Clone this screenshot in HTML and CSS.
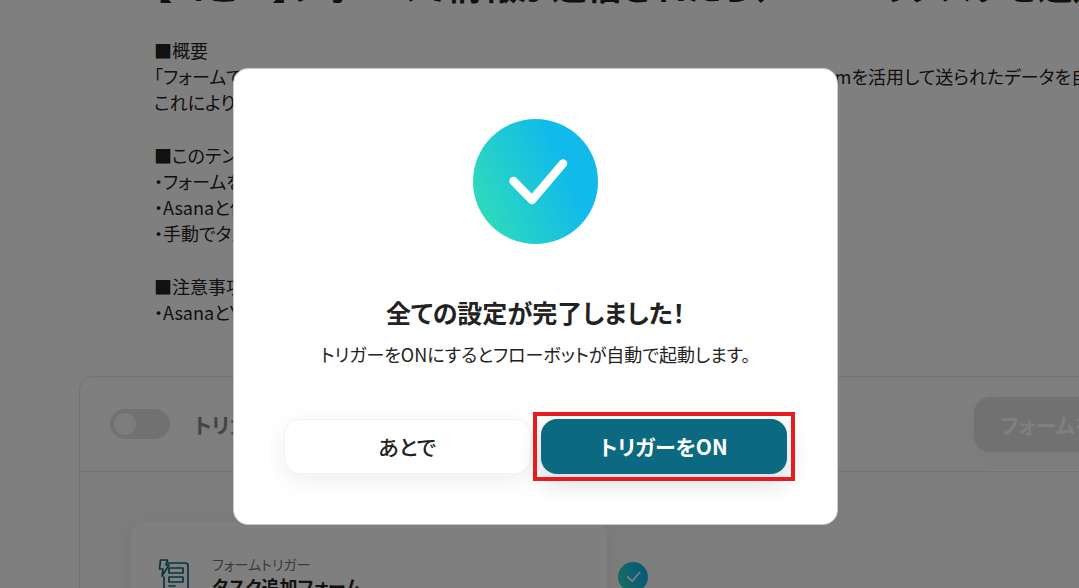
FILE: index.html
```html
<!DOCTYPE html>
<html lang="ja">
<head>
    <meta charset="UTF-8">
    <meta name="viewport" content="width=device-width, initial-scale=1.0">
    <title>フローボット</title>
    <link rel="stylesheet" href="styles.css">
</head>
<body>
    <svg class="defs" aria-hidden="true">
        <defs>
            <linearGradient id="check-grad" x1="0.1" y1="0.75" x2="0.9" y2="0.4">
                <stop offset="0" stop-color="#2dd8be"/>
                <stop offset="0.85" stop-color="#10baeb"/>
            </linearGradient>
        </defs>
    </svg>

    <main class="page">
        <header class="intro">
            <h1>【コピー】フォームで情報が送信されたら、Asanaのタスクを追加する</h1>
            <p>■概要<br>
            「フォームで情報が送信されたらAsanaのタスクを追加する」フローは、業務で Google Formを活用して送られたデータを自動でタスク化します。<br>
            これにより、タスクの登録漏れを防ぎます。</p>
            <p>■このテンプレートをおすすめする方<br>
            ・フォームを利用して依頼を受け付けている方<br>
            ・Asanaと他のツールを連携したい方<br>
            ・手動でタスクを追加している方</p>
            <p>■注意事項<br>
            ・AsanaとYoomを連携してください。</p>
        </header>

        <section class="panel">
            <div class="panel-header">
                <input type="checkbox" class="toggle" id="trigger">
                <label for="trigger" class="trigger-label">トリガーOFF</label>
                <button type="button" class="form-btn" disabled>フォームを開く</button>
            </div>
            <div class="panel-body">
                <div class="card">
                    <svg class="card-icon" width="32" height="40" viewBox="0 0 32 40" fill="none" stroke="#0b6a80" stroke-width="1.7" stroke-linejoin="round" stroke-linecap="round">
                        <path d="M10 4H27.500Q30 4 30 6.500V38H6V18"/>
                        <path d="M2.500 1H9.500L8 6H11L4 17L5 10H1.500Z"/>
                        <path d="M11 9H25V14H11ZM11 18H25V23H11ZM11 27H17M11 32H25"/>
                    </svg>
                    <div>
                        <div class="card-type">フォームトリガー</div>
                        <div class="card-name">タスク追加フォーム</div>
                    </div>
                </div>
                <svg class="card-status" width="30" height="30" viewBox="0 0 125 125">
                    <circle cx="62.500" cy="62.500" r="62.500" fill="url(#check-grad)"/>
                    <path d="M40 62L59 80L90 44" fill="none" stroke="#fff" stroke-width="7" stroke-linecap="round" stroke-linejoin="round"/>
                </svg>
            </div>
        </section>
    </main>

    <div class="overlay">
        <div class="modal" role="dialog" aria-labelledby="modal-title">
            <svg class="modal-icon" width="125" height="125" viewBox="0 0 125 125">
                <circle cx="62.500" cy="62.500" r="62.500" fill="url(#check-grad)"/>
                <path d="M40.500 62L59 81L90 44.500" fill="none" stroke="#fff" stroke-width="8.500" stroke-linecap="round" stroke-linejoin="round"/>
            </svg>
            <h2 id="modal-title">全ての設定が完了しました！</h2>
            <p>トリガーをONにするとフローボットが自動で起動します。</p>
            <div class="modal-actions">
                <button type="button" class="btn btn-later">あとで</button>
                <div class="highlight">
                    <button type="button" class="btn btn-on">トリガーをON</button>
                </div>
            </div>
        </div>
    </div>
</body>
</html>
```
FILE: styles.css
```css
* {
    box-sizing: border-box;
}
html, body {
    height: 100%;
}
body {
    margin: 0;
    overflow: hidden;
    background: #fff;
    color: #222;
    font-family: "Noto Sans CJK JP", sans-serif;
    font-feature-settings: "palt";
}
button {
    font-family: inherit;
    font-feature-settings: inherit;
    cursor: pointer;
}
.defs {
    position: absolute;
    width: 0;
    height: 0;
}
.page {
    padding-left: 79px;
    margin-top: -39px;
}
.intro {
    padding-left: 75px;
    white-space: nowrap;
}
.intro h1 {
    margin: 0 0 28px;
    font-size: 35px;
    line-height: 48px;
}
.intro p {
    margin: 0 0 27px;
    font-size: 18px;
    line-height: 26px;
}
.panel {
    margin-top: 51px;
    border: 1px solid #e6e6e6;
    border-right: none;
    border-radius: 14px 0 0 0;
}
.panel-header {
    display: flex;
    align-items: center;
    height: 95px;
    padding-left: 30px;
    border-bottom: 1px solid #e6e6e6;
}
.toggle {
    appearance: none;
    flex: none;
    display: flex;
    align-items: center;
    width: 60px;
    height: 30px;
    margin: 0 11px 0 0;
    padding: 4px;
    border-radius: 15px;
    background: #e2e2e2;
}
.toggle::before {
    content: "";
    width: 22px;
    height: 22px;
    border-radius: 50%;
    background: #fbfbfb;
}
.trigger-label {
    padding: 0 13px;
    border-radius: 25px;
    background: #fcfcfc;
    color: #888;
    font-size: 21px;
    font-weight: bold;
    line-height: 50px;
}
.form-btn {
    flex: none;
    width: 210px;
    height: 55px;
    margin: 0 -105px 0 auto;
    padding: 0 26px;
    border: none;
    border-radius: 16px;
    background: #e2e2e2;
    color: #fff;
    font-size: 21px;
    font-weight: bold;
    text-align: left;
    box-shadow: 0 6px 20px rgba(0, 0, 0, 0.06);
}
.panel-body {
    display: flex;
    align-items: flex-start;
    gap: 11px;
    min-height: 300px;
    padding: 50px 0 0 51px;
    background: #fafafa;
}
.card {
    display: flex;
    gap: 22px;
    width: 476px;
    height: 110px;
    padding: 31px 27px;
    border-radius: 14px;
    background: #fff;
    box-shadow: 0 4px 20px rgba(0, 0, 0, 0.07);
}
.card-icon {
    margin-top: 6px;
}
.card-type {
    color: #777;
    font-size: 14px;
    line-height: 22px;
}
.card-name {
    font-size: 18px;
    font-weight: bold;
    line-height: 22px;
}
.card-status {
    margin-top: 40px;
}
.overlay {
    position: fixed;
    inset: 0;
    display: flex;
    align-items: center;
    justify-content: center;
    padding: 5px 8px 0 0;
    background: rgba(0, 0, 0, 0.5);
}
.modal {
    width: 605px;
    padding: 50px;
    border: 1px solid #ccc;
    border-radius: 15px;
    background: #fff;
    text-align: center;
}
.modal-icon {
    display: block;
    margin: 0 auto 48px;
}
.modal h2 {
    margin: 0 0 6px;
    font-size: 25px;
    font-weight: bold;
    line-height: 40px;
}
.modal p {
    margin: 0 0 49px;
    font-size: 18px;
    line-height: 32px;
}
.modal-actions {
    display: grid;
    grid-template-columns: 1fr 1fr;
    gap: 10px;
}
.btn {
    height: 55px;
    padding: 0 0 2px;
    border: none;
    border-radius: 16px;
    font-size: 21px;
    font-weight: 500;
}
.btn-later {
    border: 1px solid #f2f2f2;
    background: #fff;
    color: #222;
    box-shadow: 0 6px 24px rgba(0, 0, 0, 0.07);
}
.btn-on {
    width: 100%;
    background: #0b6982;
    color: #fff;
    font-weight: bold;
    box-shadow: 0 8px 24px rgba(20, 30, 60, 0.18);
}
.highlight {
    position: relative;
}
.highlight::after {
    content: "";
    position: absolute;
    inset: -7px -8px;
    border: 4px solid #e81c20;
    pointer-events: none;
}
```
